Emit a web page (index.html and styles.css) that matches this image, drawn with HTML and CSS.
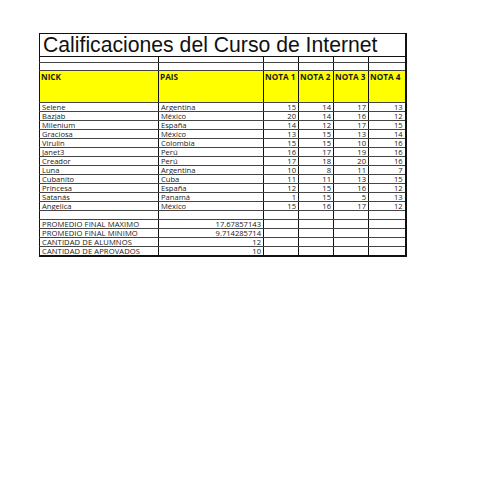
FILE: index.html
```html
<!DOCTYPE html>
<html>
<head>
<meta charset="utf-8">
<link rel="stylesheet" href="styles.css">
</head>
<body>
<div class="page">
<table class="sheet">
<colgroup>
<col class="c-nick"><col class="c-pais"><col class="c-n"><col class="c-n"><col class="c-n"><col class="c-n4">
</colgroup>
<tr class="title"><td colspan="6">Calificaciones del Curso de Internet</td></tr>
<tr class="blank1"><td></td><td></td><td></td><td></td><td></td><td></td></tr>
<tr class="blank2"><td></td><td></td><td></td><td></td><td></td><td></td></tr>
<tr class="head"><td>NICK</td><td>PAIS</td><td>NOTA 1</td><td>NOTA 2</td><td>NOTA 3</td><td>NOTA 4</td></tr>
<tr class="row"><td>Selene</td><td>Argentina</td><td class="num">15</td><td class="num">14</td><td class="num">17</td><td class="num">13</td></tr>
<tr class="row"><td>Bazjab</td><td>México</td><td class="num">20</td><td class="num">14</td><td class="num">16</td><td class="num">12</td></tr>
<tr class="row"><td>Milenium</td><td>España</td><td class="num">14</td><td class="num">12</td><td class="num">17</td><td class="num">15</td></tr>
<tr class="row"><td>Graciosa</td><td>México</td><td class="num">13</td><td class="num">15</td><td class="num">13</td><td class="num">14</td></tr>
<tr class="row"><td>Virulin</td><td>Colombia</td><td class="num">15</td><td class="num">15</td><td class="num">10</td><td class="num">16</td></tr>
<tr class="row"><td>Janet3</td><td>Perú</td><td class="num">16</td><td class="num">17</td><td class="num">19</td><td class="num">16</td></tr>
<tr class="row"><td>Creador</td><td>Perú</td><td class="num">17</td><td class="num">18</td><td class="num">20</td><td class="num">16</td></tr>
<tr class="row"><td>Luna</td><td>Argentina</td><td class="num">10</td><td class="num">8</td><td class="num">11</td><td class="num">7</td></tr>
<tr class="row"><td>Cubanito</td><td>Cuba</td><td class="num">11</td><td class="num">11</td><td class="num">13</td><td class="num">15</td></tr>
<tr class="row"><td>Princesa</td><td>España</td><td class="num">12</td><td class="num">15</td><td class="num">16</td><td class="num">12</td></tr>
<tr class="row"><td>Satanás</td><td>Panamá</td><td class="num">1</td><td class="num">15</td><td class="num">5</td><td class="num">13</td></tr>
<tr class="row"><td>Angelica</td><td>México</td><td class="num">15</td><td class="num">16</td><td class="num">17</td><td class="num">12</td></tr>
<tr class="row gap"><td></td><td></td><td></td><td></td><td></td><td></td></tr>
<tr class="row sum"><td>PROMEDIO FINAL MAXIMO</td><td class="num">17.67857143</td><td></td><td></td><td></td><td></td></tr>
<tr class="row sum"><td>PROMEDIO FINAL MINIMO</td><td class="num">9.714285714</td><td></td><td></td><td></td><td></td></tr>
<tr class="row sum"><td>CANTIDAD DE ALUMNOS</td><td class="num">12</td><td></td><td></td><td></td><td></td></tr>
<tr class="row sum last"><td>CANTIDAD DE APROVADOS</td><td class="num">10</td><td></td><td></td><td></td><td></td></tr>
</table>
</div>
</body>
</html>
```
FILE: styles.css
```css
html, body {
  margin: 0;
  padding: 0;
  background: #fff;
}
.page {
  padding: 33px 0 0 39px;
}
.sheet {
  border-collapse: collapse;
  table-layout: fixed;
  width: 366px;
  font-family: "Open Sans", "Liberation Sans", sans-serif;
  color: #1a1a1a;
}
.c-nick { width: 119px; }
.c-pais { width: 105px; }
.c-n { width: 35px; }
.c-n4 { width: 37px; }
.sheet td {
  padding: 0 2px;
  border-left: 1px solid #111;
  border-right: 1px solid #111;
  border-top: 1px solid #444;
  border-bottom: 1px solid #444;
  overflow: hidden;
  white-space: nowrap;
}
.title td {
  height: 22px;
  font-family: "Liberation Sans", Arial, sans-serif;
  font-size: 21.2px;
  line-height: 22px;
  padding: 0 0 0 3px;
  border: 1px solid #111;
  color: #111;
}
.blank1 td { height: 5px; padding: 0; }
.blank2 td { height: 7px; padding: 0; }
.head td {
  height: 31px;
  background: #ffff00;
  font-size: 8.2px;
  font-weight: 700;
  line-height: 11px;
  vertical-align: top;
  padding: 0 1px;
}
.row td {
  height: 8px;
  font-size: 7.6px;
  line-height: 8px;
  padding-top: 0;
  padding-bottom: 0;
}
.sum td:first-child {
  letter-spacing: 0.1px;
}
.num { text-align: right; }
.last td { border-bottom: 2px solid #111; }
.sheet tr td:last-child { border-right: 2px solid #111; }
```
